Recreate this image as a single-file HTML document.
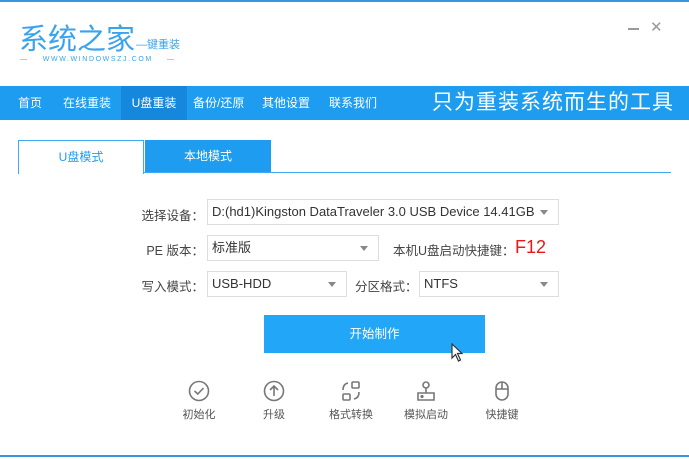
<!DOCTYPE html>
<html><head><meta charset="utf-8"><style>
*{margin:0;padding:0;box-sizing:border-box}
body{width:689px;height:459px;background:#fff;position:relative;overflow:hidden;font-family:"Liberation Sans","Noto Sans CJK SC",sans-serif;color:#444}
.a{position:absolute}
.nav{top:86px;left:0;width:689px;height:34px;background:#1d9cf0}
.nav span{position:absolute;top:0;height:34px;line-height:34px;font-size:12px;color:#fff}
.sel{border:1px solid #ddd;background:#fff;height:26px;font-size:13px;line-height:24px;padding-left:4px;color:#333}
.sel:after{content:"";position:absolute;right:10px;top:10px;border:4px solid transparent;border-top:5px solid #888}
.lbl{font-size:12.5px;color:#444;text-align:right;width:100px}
.ic{top:380px;width:60px;text-align:center;font-size:11px;color:#555}
.ic svg{display:block;margin:0 auto 4px}
</style></head><body>
<div class="a" style="top:0;left:0;width:689px;height:2px;background:#3a95e0"></div>
<div class="a" style="top:16px;left:19px;font-size:29px;color:#3aa3ee;letter-spacing:0px">系统之家</div>
<div class="a" style="top:36px;left:136px;font-size:11px;color:#3aa3ee">—键重装</div>
<div class="a" style="top:56px;left:20px;font-size:7px;color:#3aa3ee;letter-spacing:1.6px;white-space:pre">—    WWW.WINDOWSZJ.COM    —</div>
<div class="a" style="top:28px;left:628px;width:11px;height:2px;background:#999"></div>
<div class="a" style="top:18px;left:650px;font-size:15px;color:#999">✕</div>
<div class="a nav">
<span style="left:18px">首页</span><span style="left:63px">在线重装</span>
<span style="left:121px;width:66px;background:#1587dc;text-align:center">U盘重装</span>
<span style="left:193px">备份/还原</span><span style="left:262px">其他设置</span><span style="left:329px">联系我们</span>
<span style="left:432px;font-size:21px;letter-spacing:1px">只为重装系统而生的工具</span>
</div>
<div class="a" style="top:140px;left:18px;width:126px;height:34px;border:1px solid #41a9f2;border-bottom:none;background:#fff;text-align:center;line-height:32px;font-size:12px;color:#1d9cf0">U盘模式</div>
<div class="a" style="top:140px;left:145px;width:126px;height:33px;background:#1d9cf0;text-align:center;line-height:33px;font-size:12px;color:#fff">本地模式</div>
<div class="a" style="top:172px;left:144px;width:527px;height:1px;background:#41a9f2"></div>

<div class="a lbl" style="top:205px;left:104px">选择设备：</div>
<div class="a sel" style="top:199px;left:207px;width:352px">D:(hd1)Kingston DataTraveler 3.0 USB Device 14.41GB</div>
<div class="a lbl" style="top:240px;left:104px">PE 版本：</div>
<div class="a sel" style="top:235px;left:207px;width:172px">标准版</div>
<div class="a" style="top:240px;left:393px;font-size:12.5px;color:#444">本机U盘启动快捷键：</div>
<div class="a" style="top:237px;left:515px;font-size:18px;color:#f01414">F12</div>
<div class="a lbl" style="top:276px;left:104px">写入模式：</div>
<div class="a sel" style="top:271px;left:207px;width:140px">USB-HDD</div>
<div class="a" style="top:276px;left:355px;font-size:12.5px;color:#444">分区格式：</div>
<div class="a sel" style="top:271px;left:419px;width:140px">NTFS</div>

<div class="a" style="top:315px;left:264px;width:221px;height:38px;background:#22a7f8;color:#fff;text-align:center;line-height:38px;font-size:12.5px">开始制作</div>
<svg class="a" style="top:343px;left:451px" width="14" height="20" viewBox="0 0 14 20"><path d="M1 1 L1 15 L4.5 11.5 L7.5 18 L9.5 17 L6.5 10.5 L11 10.5 Z" fill="#fff" stroke="#333" stroke-width="1.2"/></svg>

<div class="a ic" style="left:169px"><svg width="22" height="22" viewBox="0 0 22 22" fill="none" stroke="#777" stroke-width="1.6"><circle cx="11" cy="11" r="9.5"/><path d="M6.5 11 L9.8 14 L15.5 8"/></svg>初始化</div>
<div class="a ic" style="left:244px"><svg width="22" height="22" viewBox="0 0 22 22" fill="none" stroke="#777" stroke-width="1.6"><circle cx="11" cy="11" r="9.5"/><path d="M11 16 V6 M7 10 L11 6 L15 10"/></svg>升级</div>
<div class="a ic" style="left:321px"><svg width="22" height="22" viewBox="0 0 22 22" fill="none" stroke="#777" stroke-width="1.6"><rect x="12" y="2" width="7" height="6" rx="1"/><rect x="3" y="14" width="7" height="6" rx="1"/><path d="M3 10 Q3 4 8 3 M19 12 Q19 18 14 19"/></svg>格式转换</div>
<div class="a ic" style="left:396px"><svg width="22" height="22" viewBox="0 0 22 22" fill="none" stroke="#777" stroke-width="1.6"><circle cx="11" cy="5" r="3"/><path d="M11 8 V13 M3 13 H19 V20 H3 Z"/><circle cx="7" cy="16.5" r="0.8" fill="#777"/></svg>模拟启动</div>
<div class="a ic" style="left:472px"><svg width="22" height="22" viewBox="0 0 22 22" fill="none" stroke="#777" stroke-width="1.6"><rect x="5" y="2" width="12" height="18" rx="6"/><path d="M5 9 H17 M11 2 V9"/></svg>快捷键</div>

<div class="a" style="top:455px;left:0;width:689px;height:2px;background:#3a95e0"></div>
</body></html>
